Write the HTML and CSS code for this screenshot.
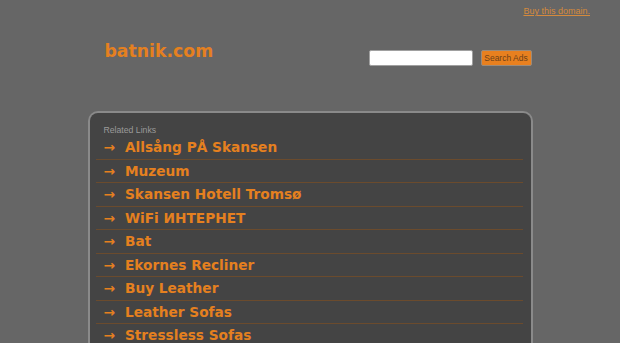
FILE: index.html
```html
<!DOCTYPE html>
<html lang="en">
<head>
<meta charset="utf-8">
<title>batnik.com</title>
<link rel="stylesheet" href="styles.css">
</head>
<body>
<div class="topbar"><a href="#" class="buy">Buy this domain.</a></div>
<div class="header">
  <div class="logo">batnik.com</div>
  <form class="search">
    <input type="text" class="search-input">
    <button type="button" class="search-btn">Search Ads</button>
  </form>
</div>
<div class="panel">
  <div class="related">Related Links</div>
  <ul class="links">
    <li class="link"><span class="arrow">→</span><a href="#">Allsång PÅ Skansen</a></li>
    <li class="link"><span class="arrow">→</span><a href="#">Muzeum</a></li>
    <li class="link"><span class="arrow">→</span><a href="#">Skansen Hotell Tromsø</a></li>
    <li class="link"><span class="arrow">→</span><a href="#">WiFi ИНТЕРНЕТ</a></li>
    <li class="link"><span class="arrow">→</span><a href="#">Bat</a></li>
    <li class="link"><span class="arrow">→</span><a href="#">Ekornes Recliner</a></li>
    <li class="link"><span class="arrow">→</span><a href="#">Buy Leather</a></li>
    <li class="link"><span class="arrow">→</span><a href="#">Leather Sofas</a></li>
    <li class="link"><span class="arrow">→</span><a href="#">Stressless Sofas</a></li>
  </ul>
</div>
</body>
</html>
```
FILE: styles.css
```css
html, body {
  margin: 0;
  padding: 0;
  background: #666666;
  overflow: hidden;
}
body {
  font-family: "Liberation Sans", Arial, sans-serif;
}
.topbar {
  height: 20px;
  box-sizing: border-box;
  padding: 6px 30px 0 0;
  text-align: right;
  font-size: 9px;
  line-height: 11px;
}
.buy {
  color: #d58a3c;
  text-decoration: underline;
}
.header {
  width: 445px;
  height: 91px;
  margin: 0 auto;
  display: flex;
  justify-content: space-between;
  align-items: flex-start;
}
.logo {
  margin: 21px 0 0 17px;
  font-family: "DejaVu Sans", sans-serif;
  font-weight: bold;
  font-size: 17.3px;
  line-height: 20px;
  color: #e5801f;
}
.search {
  margin: 30px 1px 0 0;
  display: flex;
  gap: 8px;
}
.search-input {
  width: 104px;
  height: 16px;
  box-sizing: border-box;
  margin: 0;
  padding: 0 3px;
  border: 1px solid #a0a0a0;
  border-radius: 2px;
  background: #ffffff;
}
.search-btn {
  width: 51px;
  height: 16px;
  box-sizing: border-box;
  margin: 0;
  padding: 0;
  border: 1px solid #9a8a7a;
  border-radius: 2px;
  background: #e8801f;
  color: #6e4118;
  font-family: "Liberation Sans", Arial, sans-serif;
  font-size: 8.5px;
  line-height: 14px;
}
.panel {
  width: 445px;
  box-sizing: border-box;
  margin: 0 auto;
  border: 2px solid #8a8a8a;
  border-bottom: none;
  border-radius: 10px 10px 0 0;
  background: #444444;
  padding: 11px 8px 0 6px;
}
.related {
  padding-left: 8px;
  font-size: 8.7px;
  line-height: 12px;
  color: #9a9a9a;
}
.links {
  list-style: none;
  margin: 0;
  padding: 0;
}
.link {
  display: flex;
  align-items: baseline;
  padding-left: 8px;
  height: 22.5px;
  line-height: 22.5px;
  border-bottom: 1px solid #6b4b2d;
  font-family: "DejaVu Sans", sans-serif;
  font-weight: bold;
  font-size: 13.7px;
  color: #e5801f;
}
.arrow {
  margin-right: 10px;
}
.link a {
  color: #e5801f;
  text-decoration: none;
}
```
